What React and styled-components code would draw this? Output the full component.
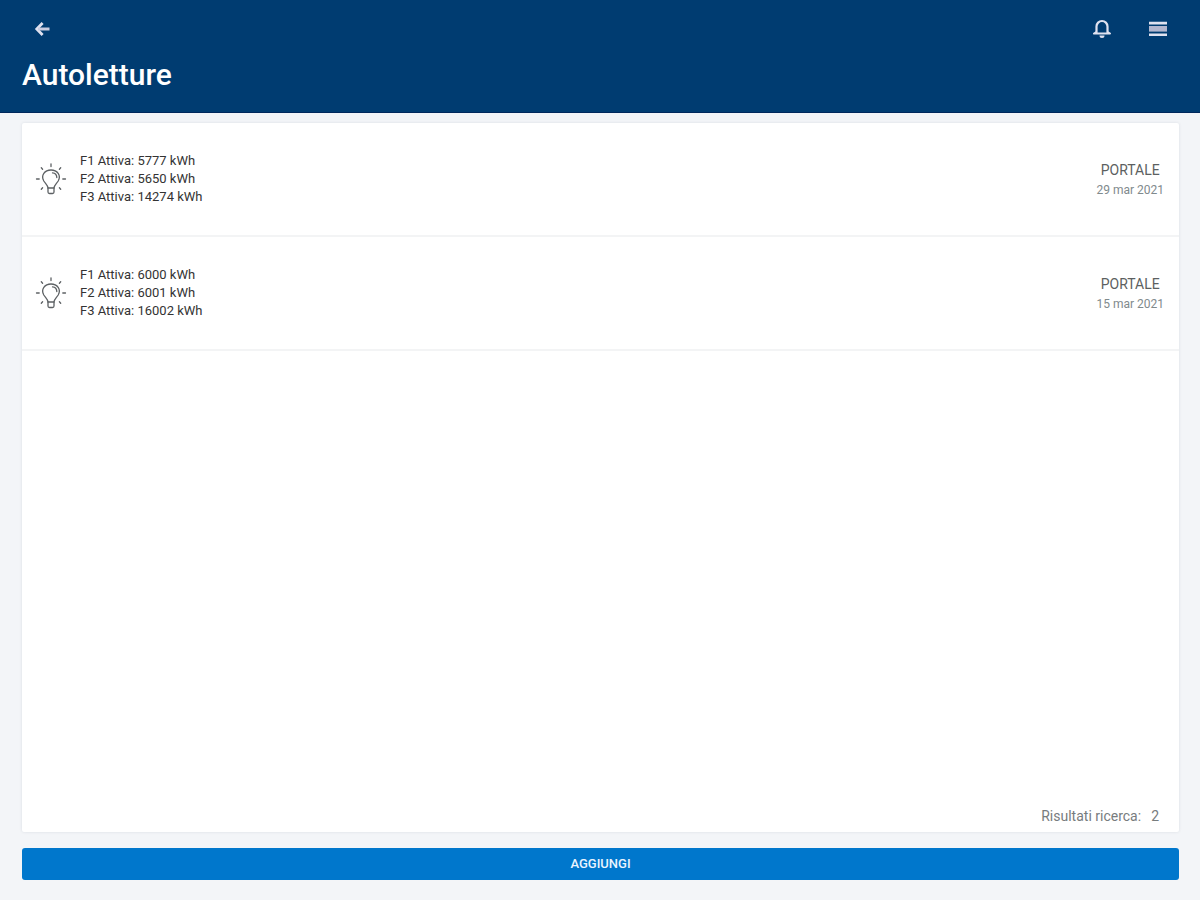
import React from "react";
import styled, { createGlobalStyle } from "styled-components";

const GlobalStyle = createGlobalStyle`
  *, *::before, *::after { box-sizing: border-box; }
  body {
    margin: 0;
    background: #f3f5f8;
    font-family: Roboto, "Liberation Sans", sans-serif;
  }
`;

const Page = styled.div`
  min-height: 100vh;
  display: flex;
  flex-direction: column;
`;

const Header = styled.header`
  background: #003c71;
  color: #fff;
  height: 113px;
  padding: 9px 22px 0;
  border-bottom: 1px solid #00285c;
`;

const Toolbar = styled.nav`
  display: flex;
  justify-content: space-between;
  align-items: center;
  height: 40px;
`;

const Actions = styled.div`
  display: flex;
  gap: 16px;
`;

const IconButton = styled.button`
  display: flex;
  align-items: center;
  justify-content: center;
  width: 40px;
  height: 40px;
  padding: 0;
  border: 0;
  background: none;
  color: #dfe2f0;
  cursor: pointer;
`;

const Title = styled.h1`
  margin: 8px 0 0;
  font-size: 30px;
  line-height: 36px;
  font-weight: 500;
`;

const Main = styled.main`
  flex: 1;
  display: flex;
  flex-direction: column;
  gap: 16px;
  padding: 10px 21px 20px 22px;
`;

const Card = styled.section`
  flex: 1;
  display: flex;
  flex-direction: column;
  justify-content: space-between;
  background: #fff;
  border-radius: 2px;
  box-shadow: 0 0 3px rgba(40, 50, 70, 0.12);
`;

const List = styled.ul`
  margin: 0;
  padding: 0;
  list-style: none;
`;

const Row = styled.li`
  display: flex;
  align-items: center;
  height: 114px;
  padding: 2px 15px 0 12px;
  border-bottom: 2px solid #f3f4f5;
`;

const Values = styled.div`
  flex: 1;
  margin-left: 12px;
  padding-bottom: 2px;
  font-size: 13px;
  line-height: 18px;
  color: #333;
`;

const Origin = styled.div`
  text-align: center;
  line-height: 20px;
`;

const Source = styled.div`
  font-size: 14px;
  color: #5c5f61;
`;

const ReadingDate = styled.time`
  display: block;
  font-size: 12px;
  color: #7f8a8d;
`;

const Results = styled.p`
  display: flex;
  justify-content: flex-end;
  gap: 10px;
  margin: 0;
  padding: 0 20px 6px;
  font-size: 14px;
  line-height: 20px;
  color: #777c7e;
`;

const AddButton = styled.button`
  width: 100%;
  height: 32px;
  padding: 0 0 2px;
  border: 0;
  border-radius: 3px;
  background: #0077cc;
  color: #eaf4ff;
  font-family: inherit;
  font-size: 13px;
  font-weight: 500;
  text-transform: uppercase;
  cursor: pointer;
`;

const BackIcon = () => (
  <svg width="18" height="18" viewBox="0 0 18 18" fill="none" stroke="currentColor" aria-hidden="true">
    <path d="M9.6 3 3.8 9l5.800 6" strokeWidth="2.8" />
    <path d="M5 9H16.500" stroke="#c9cce0" strokeWidth="3" />
  </svg>
);

const BellIcon = () => (
  <svg width="22" height="22" viewBox="0 0 22 22" fill="none" stroke="currentColor" aria-hidden="true">
    <path d="M5.500 15V8.500a5.500 5.500 0 0 1 11 0V15" strokeWidth="2.200" />
    <path d="M5.500 14 3 15.600h16L16.500 14" strokeWidth="2" strokeLinejoin="round" />
    <path d="M8.500 17.500h5a2.500 2.500 0 0 1-5 0z" fill="currentColor" stroke="none" />
  </svg>
);

const MenuIcon = () => (
  <svg width="20" height="18" viewBox="0 0 20 18" aria-hidden="true">
    <path d="M1 1.800h18v2.600H1zM1 13.400h18V16H1z" fill="currentColor" />
    <path d="M1 6h18v5.600H1z" fill="#b3b7cf" />
  </svg>
);

const BulbIcon = () => (
  <svg width="34" height="36" viewBox="0 0 34 36" fill="none" stroke="#5d6164" strokeWidth="1.3" strokeLinecap="round" aria-hidden="true">
    <path d="M14 26c-.3-3-2.500-4.300-4.200-7C6.600 13.500 10.700 8 17 8s10.400 5.500 7.200 11c-1.700 2.700-3.900 4-4.200 7z" />
    <path d="M14 26v4q0 1.500 1.500 1.500h3q1.500 0 1.500-1.500v-4" />
    <path d="M18.500 10.800c2.800.2 4.300 2 4.300 4.700" />
    <path d="M17 1.800v2.700M7.300 5.800l1.300 1.400M26.700 5.800l-1.300 1.400M2.500 17h2.700M28.800 17h2.700M7.300 27.200l1.300-1.400M26.700 27.200l-1.300-1.400" />
  </svg>
);

const readings = [
  { values: ["5777", "5650", "14274"], date: "29 mar 2021", iso: "2021-03-29" },
  { values: ["6000", "6001", "16002"], date: "15 mar 2021", iso: "2021-03-15" },
];

export default function App() {
  return (
    <Page>
      <GlobalStyle />
      <Header>
        <Toolbar>
          <IconButton type="button" aria-label="Indietro"><BackIcon /></IconButton>
          <Actions>
            <IconButton type="button" aria-label="Notifiche"><BellIcon /></IconButton>
            <IconButton type="button" aria-label="Menu"><MenuIcon /></IconButton>
          </Actions>
        </Toolbar>
        <Title>Autoletture</Title>
      </Header>
      <Main>
        <Card>
          <List>
            {readings.map((reading) => (
              <Row key={reading.iso}>
                <BulbIcon />
                <Values>
                  {reading.values.map((value, i) => (
                    <div key={i}>{`F${i + 1} Attiva: ${value} kWh`}</div>
                  ))}
                </Values>
                <Origin>
                  <Source>PORTALE</Source>
                  <ReadingDate dateTime={reading.iso}>{reading.date}</ReadingDate>
                </Origin>
              </Row>
            ))}
          </List>
          <Results>
            <span>Risultati ricerca:</span>
            <span>{readings.length}</span>
          </Results>
        </Card>
        <AddButton type="button">Aggiungi</AddButton>
      </Main>
    </Page>
  );
}
